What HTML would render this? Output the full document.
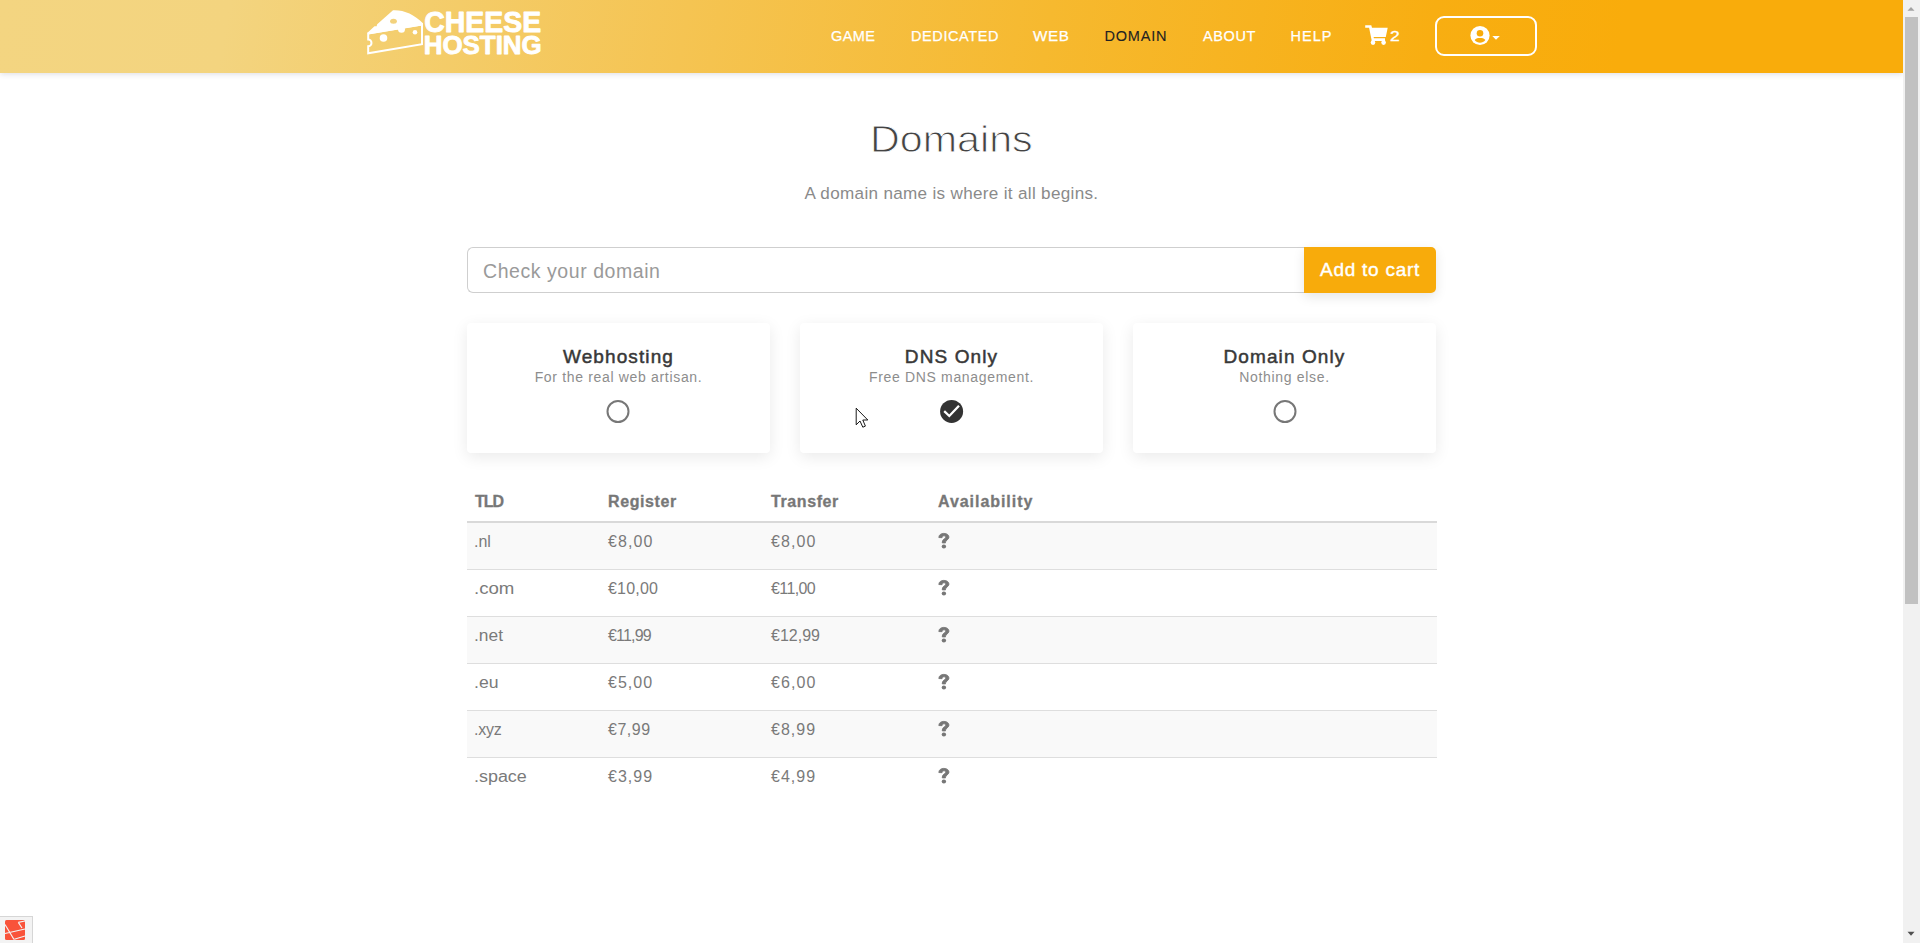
<!DOCTYPE html>
<html>
<head>
<meta charset="utf-8">
<style>
html,body{margin:0;padding:0;}
body{width:1920px;height:943px;overflow:hidden;position:relative;background:#fff;font-family:"Liberation Sans",sans-serif;}
.abs{position:absolute;}
.t{position:absolute;white-space:nowrap;line-height:1;}
#nav{position:absolute;left:0;top:0;width:1903px;height:73px;
 background:linear-gradient(100deg,#f3d581 0%,#f3d47f 12%,#f5c452 36%,#f6b92f 55%,#f8ae12 75%,#f9ac0b 85%,#f9ac0b 100%);
 box-shadow:0 1px 6px rgba(60,60,90,0.18);z-index:2;}
.nl{color:#fff;font-size:14.5px;letter-spacing:0.4px;-webkit-text-stroke:0.25px currentColor;}
#scroll{position:absolute;left:1903px;top:0;width:17px;height:943px;background:#f1f1f1;z-index:5;}
.card{position:absolute;top:323px;width:303px;height:130px;background:#fff;border-radius:4px;box-shadow:0 4px 16px rgba(0,0,0,0.085);}
.ct{color:#383838;font-size:19px;font-weight:normal;letter-spacing:1.1px;-webkit-text-stroke:0.5px #383838;}
.cs{color:#8d8d8d;font-size:14px;letter-spacing:0.67px;}
.row{position:absolute;left:467px;width:970px;height:46px;border-bottom:1px solid #dedede;}
.g{background:#f9f9f9;}
.td{color:#7a7a7a;font-size:16px;}
.th{color:#777;font-size:16px;font-weight:bold;letter-spacing:0.6px;-webkit-text-stroke:0.3px #777;}
</style>
</head>
<body>
<div id="nav">
  <!-- cheese icon -->
  <svg class="abs" style="left:362px;top:6px" width="66" height="54" viewBox="0 0 66 54">
    <path fill="#fff" d="M5.2,27 L12.5,20.3 L14.6,20.3 L15.2,18.3 L31,4.3 C42,3.8 52,8.5 61,17.2 L61,19.3 L7.2,28.2 Z"/>
    <path fill="none" stroke="#fff" stroke-width="2" stroke-linejoin="miter" d="M6.2,27.6 L60,18.6 L60,38.2 L6.2,47.2 L6.2,40.2 A3.3,3.3 0 0 0 6.2,33.6 Z"/>
    <ellipse cx="31.5" cy="15.2" rx="3.4" ry="2.5" fill="#f3d27d"/>
    <circle cx="39.5" cy="23.3" r="3.5" fill="#fff"/>
    <circle cx="21.5" cy="32" r="3.8" fill="#fff"/>
    <circle cx="53" cy="26.3" r="2.3" fill="#fff"/>
  </svg>
  <svg class="abs" style="left:424px;top:8px" width="120" height="50" viewBox="0 0 120 50">
    <text x="0.2" y="23.95" font-family="Liberation Sans" font-weight="bold" font-size="30.2" fill="#fff" stroke="#fff" stroke-width="0.9" stroke-linejoin="round" textLength="117" lengthAdjust="spacingAndGlyphs">CHEESE</text>
    <text x="-0.3" y="45.75" font-family="Liberation Sans" font-weight="bold" font-size="26.5" fill="#fff" stroke="#fff" stroke-width="0.9" stroke-linejoin="round" textLength="118" lengthAdjust="spacingAndGlyphs">HOSTING</text>
  </svg>
  <div class="t nl" style="left:831px;top:29px">GAME</div>
  <div class="t nl" style="left:911px;top:29px;letter-spacing:0.6px">DEDICATED</div>
  <div class="t nl" style="left:1033px;top:29px;letter-spacing:0.6px;transform:scaleX(1.05);transform-origin:0 0">WEB</div>
  <div class="t nl" style="left:1104.5px;top:29px;color:#222;letter-spacing:0.8px;-webkit-text-stroke:0.1px #222">DOMAIN</div>
  <div class="t nl" style="left:1203px;top:29px;letter-spacing:0.6px">ABOUT</div>
  <div class="t nl" style="left:1290.5px;top:29px;letter-spacing:1.0px">HELP</div>
  <!-- cart -->
  <svg class="abs" style="left:1360px;top:18px" width="30" height="30" viewBox="0 0 30 30">
    <path fill="#fff" d="M5.2,7.3 L11.3,7.3 L12,9.8 L27.7,9.8 L25.8,19 L13.6,19 L13.9,20.3 L25,20.3 L25,23 L11.8,23 L9.1,9.8 L5.2,9.8 Z"/>
    <circle cx="13" cy="24.6" r="2.3" fill="#fff"/>
    <circle cx="23.6" cy="24.6" r="2.3" fill="#fff"/>
  </svg>
  <div class="t" style="left:1389.5px;top:28.5px;color:#fff;font-size:14px;transform:scaleX(1.25);transform-origin:left;-webkit-text-stroke:0.3px #fff">2</div>
  <!-- user button -->
  <div class="abs" style="left:1435px;top:16px;width:98px;height:36px;border:2px solid #fff;border-radius:9px;"></div>
  <svg class="abs" style="left:1468px;top:24px" width="36" height="24" viewBox="0 0 36 24">
    <circle cx="12" cy="11.5" r="9.6" fill="#fff"/>
    <circle cx="12" cy="9.3" r="3.3" fill="#f9ac0b"/>
    <path fill="#f9ac0b" d="M6.6,16.1 C8,14.3 10,14 12,14 C14,14 16,14.3 17.4,16.1 C16,18 14,18.8 12,18.8 C10,18.8 8,18 6.6,16.1 Z"/>
    <path fill="#fff" d="M24.3,12 L31.8,12 L28,15.8 Z"/>
  </svg>
</div>

<!-- title -->
<div class="t" style="left:0;width:1903px;text-align:center;top:122px;font-size:36px;color:#444;transform:scaleX(1.145);transform-origin:952.5px 0;-webkit-text-stroke:0.9px #fff">Domains</div>
<div class="t" style="left:0;width:1903px;text-align:center;top:185px;font-size:16.3px;color:#8a8a8a;letter-spacing:0.3px;transform:scaleX(1.05);transform-origin:952px 0">A domain name is where it all begins.</div>

<!-- input -->
<div class="abs" style="left:467px;top:247px;width:836px;height:44px;border:1px solid #cfcfcf;border-right:none;border-radius:6px 0 0 6px;"></div>
<div class="t" style="left:483px;top:262px;font-size:19.5px;color:#9a9a9a;letter-spacing:0.56px">Check your domain</div>
<div class="abs" style="left:1304px;top:247px;width:132px;height:46px;background:#f8ab0b;border-radius:0 5px 5px 0;box-shadow:0 4px 12px rgba(0,0,0,0.1);"></div>
<div class="t" style="left:1320px;top:260px;font-size:19px;color:#fff;letter-spacing:0.75px;-webkit-text-stroke:0.4px #fff">Add to cart</div>

<!-- cards -->
<div class="card" style="left:467px"></div>
<div class="card" style="left:800px"></div>
<div class="card" style="left:1133px"></div>
<div class="t ct" style="left:467px;width:303px;text-align:center;top:347px">Webhosting</div>
<div class="t cs" style="left:467px;width:303px;text-align:center;top:369.5px">For the real web artisan.</div>
<div class="t ct" style="left:800px;width:303px;text-align:center;top:347px">DNS Only</div>
<div class="t cs" style="left:800px;width:303px;text-align:center;top:369.5px">Free DNS management.</div>
<div class="t ct" style="left:1133px;width:303px;text-align:center;top:347px">Domain Only</div>
<div class="t cs" style="left:1133px;width:303px;text-align:center;top:369.5px">Nothing else.</div>
<svg class="abs" style="left:605px;top:399px" width="26" height="26"><circle cx="13" cy="12.5" r="10.5" fill="none" stroke="#777" stroke-width="2"/></svg>
<svg class="abs" style="left:1272px;top:399px" width="26" height="26"><circle cx="13" cy="12.5" r="10.5" fill="none" stroke="#777" stroke-width="2"/></svg>
<svg class="abs" style="left:939px;top:399px" width="26" height="26"><circle cx="12.6" cy="12.4" r="11.5" fill="#333"/><path d="M5.2,12.2 L10.3,17 L20,6.8" fill="none" stroke="#fff" stroke-width="2.3"/></svg>
<!-- cursor -->
<svg class="abs" style="left:855px;top:407px;z-index:10" width="16" height="22" viewBox="0 0 16 22">
  <path d="M1.2,1.2 L1.2,17.8 L5,14 L7.8,20.2 L10.4,19.1 L7.8,13 L12.8,13 Z" fill="#fff" stroke="#000" stroke-width="0.9" stroke-linejoin="miter"/>
</svg>

<!-- table -->
<div class="abs" style="left:467px;top:521px;width:970px;height:2px;background:#d9d9d9"></div>
<div class="t th" style="left:475px;top:494px;letter-spacing:-1px">TLD</div>
<div class="t th" style="left:608px;top:494px">Register</div>
<div class="t th" style="left:771px;top:494px">Transfer</div>
<div class="t th" style="left:938px;top:494px;letter-spacing:0.95px">Availability</div>

<div class="row g" style="top:523px"></div>
<div class="row" style="top:570px"></div>
<div class="row g" style="top:617px"></div>
<div class="row" style="top:664px"></div>
<div class="row g" style="top:711px"></div>
<div class="row" style="top:758px;border-bottom:none"></div>

<div class="t td" style="left:474px;top:534px;letter-spacing:0px">.nl</div>
<div class="t td" style="left:608px;top:534px;letter-spacing:1.1px">€8,00</div>
<div class="t td" style="left:771px;top:534px;letter-spacing:1.1px">€8,00</div>
<div class="t td" style="left:474px;top:581px;letter-spacing:0px;transform:scaleX(1.165);transform-origin:0 0">.com</div>
<div class="t td" style="left:608px;top:581px;letter-spacing:0.2px">€10,00</div>
<div class="t td" style="left:771px;top:581px;letter-spacing:-0.6px">€11,00</div>
<div class="t td" style="left:474px;top:628px;letter-spacing:0px;transform:scaleX(1.085);transform-origin:0 0">.net</div>
<div class="t td" style="left:608px;top:628px;letter-spacing:-0.8px">€11,99</div>
<div class="t td" style="left:771px;top:628px;letter-spacing:0px">€12,99</div>
<div class="t td" style="left:474px;top:675px;letter-spacing:0px;transform:scaleX(1.1);transform-origin:0 0">.eu</div>
<div class="t td" style="left:608px;top:675px;letter-spacing:1.0px">€5,00</div>
<div class="t td" style="left:771px;top:675px;letter-spacing:1.1px">€6,00</div>
<div class="t td" style="left:474px;top:722px;letter-spacing:-0.2px">.xyz</div>
<div class="t td" style="left:608px;top:722px;letter-spacing:0.5px">€7,99</div>
<div class="t td" style="left:771px;top:722px;letter-spacing:1.0px">€8,99</div>
<div class="t td" style="left:474px;top:769px;letter-spacing:0px;transform:scaleX(1.12);transform-origin:0 0">.space</div>
<div class="t td" style="left:608px;top:769px;letter-spacing:1.0px">€3,99</div>
<div class="t td" style="left:771px;top:769px;letter-spacing:1.0px">€4,99</div>

<svg class="abs" style="left:936.8px;top:532.2px" width="13.8" height="17.1" viewBox="0 0 12 16" preserveAspectRatio="none"><path d="M1.6,5.2 C1.6,2.6 3.6,1.3 6,1.3 C8.6,1.3 10.4,2.8 10.4,4.8 C10.4,7.2 7.4,7.6 7.4,9.6 L7.4,10.2 L4.6,10.2 L4.6,9.4 C4.6,6.8 7.6,6.4 7.6,4.9 C7.6,4 6.9,3.6 6,3.6 C5,3.6 4.4,4.3 4.4,5.3 Z" fill="#777" stroke="#777" stroke-width="0.8" stroke-linejoin="round"/><circle cx="6" cy="13.6" r="1.9" fill="#777"/></svg>
<svg class="abs" style="left:936.8px;top:579.2px" width="13.8" height="17.1" viewBox="0 0 12 16" preserveAspectRatio="none"><path d="M1.6,5.2 C1.6,2.6 3.6,1.3 6,1.3 C8.6,1.3 10.4,2.8 10.4,4.8 C10.4,7.2 7.4,7.6 7.4,9.6 L7.4,10.2 L4.6,10.2 L4.6,9.4 C4.6,6.8 7.6,6.4 7.6,4.9 C7.6,4 6.9,3.6 6,3.6 C5,3.6 4.4,4.3 4.4,5.3 Z" fill="#777" stroke="#777" stroke-width="0.8" stroke-linejoin="round"/><circle cx="6" cy="13.6" r="1.9" fill="#777"/></svg>
<svg class="abs" style="left:936.8px;top:626.2px" width="13.8" height="17.1" viewBox="0 0 12 16" preserveAspectRatio="none"><path d="M1.6,5.2 C1.6,2.6 3.6,1.3 6,1.3 C8.6,1.3 10.4,2.8 10.4,4.8 C10.4,7.2 7.4,7.6 7.4,9.6 L7.4,10.2 L4.6,10.2 L4.6,9.4 C4.6,6.8 7.6,6.4 7.6,4.9 C7.6,4 6.9,3.6 6,3.6 C5,3.6 4.4,4.3 4.4,5.3 Z" fill="#777" stroke="#777" stroke-width="0.8" stroke-linejoin="round"/><circle cx="6" cy="13.6" r="1.9" fill="#777"/></svg>
<svg class="abs" style="left:936.8px;top:673.2px" width="13.8" height="17.1" viewBox="0 0 12 16" preserveAspectRatio="none"><path d="M1.6,5.2 C1.6,2.6 3.6,1.3 6,1.3 C8.6,1.3 10.4,2.8 10.4,4.8 C10.4,7.2 7.4,7.6 7.4,9.6 L7.4,10.2 L4.6,10.2 L4.6,9.4 C4.6,6.8 7.6,6.4 7.6,4.9 C7.6,4 6.9,3.6 6,3.6 C5,3.6 4.4,4.3 4.4,5.3 Z" fill="#777" stroke="#777" stroke-width="0.8" stroke-linejoin="round"/><circle cx="6" cy="13.6" r="1.9" fill="#777"/></svg>
<svg class="abs" style="left:936.8px;top:720.2px" width="13.8" height="17.1" viewBox="0 0 12 16" preserveAspectRatio="none"><path d="M1.6,5.2 C1.6,2.6 3.6,1.3 6,1.3 C8.6,1.3 10.4,2.8 10.4,4.8 C10.4,7.2 7.4,7.6 7.4,9.6 L7.4,10.2 L4.6,10.2 L4.6,9.4 C4.6,6.8 7.6,6.4 7.6,4.9 C7.6,4 6.9,3.6 6,3.6 C5,3.6 4.4,4.3 4.4,5.3 Z" fill="#777" stroke="#777" stroke-width="0.8" stroke-linejoin="round"/><circle cx="6" cy="13.6" r="1.9" fill="#777"/></svg>
<svg class="abs" style="left:936.8px;top:767.2px" width="13.8" height="17.1" viewBox="0 0 12 16" preserveAspectRatio="none"><path d="M1.6,5.2 C1.6,2.6 3.6,1.3 6,1.3 C8.6,1.3 10.4,2.8 10.4,4.8 C10.4,7.2 7.4,7.6 7.4,9.6 L7.4,10.2 L4.6,10.2 L4.6,9.4 C4.6,6.8 7.6,6.4 7.6,4.9 C7.6,4 6.9,3.6 6,3.6 C5,3.6 4.4,4.3 4.4,5.3 Z" fill="#777" stroke="#777" stroke-width="0.8" stroke-linejoin="round"/><circle cx="6" cy="13.6" r="1.9" fill="#777"/></svg>

<!-- debugbar -->
<div class="abs" style="left:0;top:916px;width:32px;height:27px;background:#f3f3f3;border-top:1px solid #d6d6d6;border-right:1px solid #d6d6d6;"></div>
<svg class="abs" style="left:4px;top:919px" width="22" height="22" viewBox="0 0 22 22">
  <rect x="1" y="1" width="20" height="20" rx="1.5" fill="#f9533a"/>
  <path d="M1,5.5 L10,20.5 M1,14.5 L21,10 M14.3,3.3 L18,9 M14.3,3.3 L21,2 M10.3,20.3 L21,17" stroke="#f3f3f3" stroke-width="1.2" fill="none"/>
</svg>

<!-- scrollbar -->
<div id="scroll">
  <svg class="abs" style="left:0;top:0" width="17" height="943">
    <path d="M4.5,10.8 L11.5,10.8 L8,7 Z" fill="#a3a3a3"/>
    <rect x="2" y="17" width="13" height="587" fill="#c1c1c1"/>
    <path d="M4.5,931.8 L11.5,931.8 L8,935.8 Z" fill="#505050"/>
  </svg>
</div>
</body>
</html>
